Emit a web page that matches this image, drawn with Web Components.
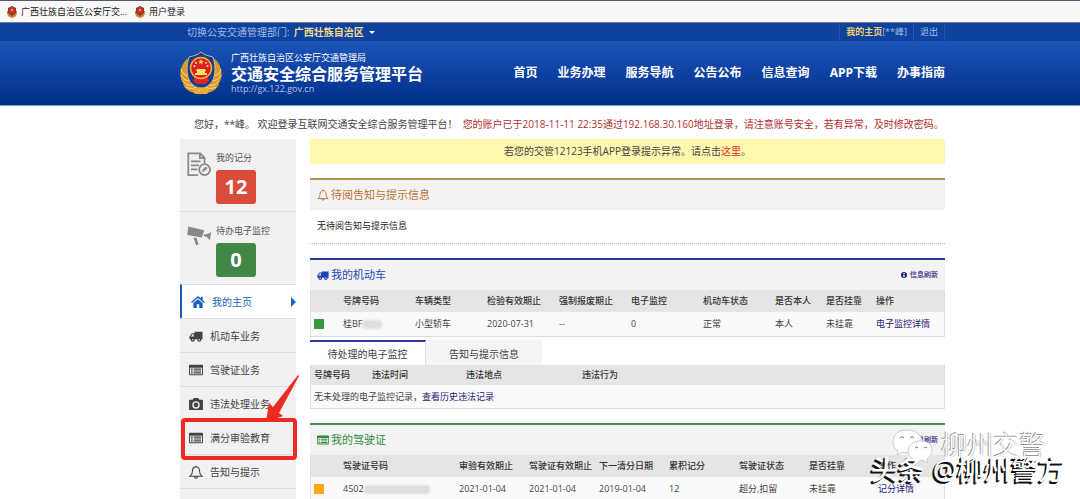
<!DOCTYPE html>
<html lang="zh-CN">
<head>
<meta charset="utf-8">
<title>交通安全综合服务管理平台</title>
<style>
  html, body { margin: 0; height: 100%; }
  body { font-family: "Open Sans", "Noto Sans CJK SC", sans-serif; font-size: 10px; line-height: 14px; color: #444; background: #fff; overflow: hidden; }
</style>
</head>
<body>
<portal-page></portal-page>

<script>
const sheet = `
  *, *::before, *::after { box-sizing: border-box; }
  :host { display: block; }
  :host([hidden]) { display: none; }
  a { color: inherit; text-decoration: none; }
  svg { display: block; }
`;

function define(name, css, html, setup) {
  const template = document.createElement('template');
  template.innerHTML = `<style>${sheet}${css}</style>${html}`;
  customElements.define(name, class extends HTMLElement {
    constructor() {
      super();
      this.attachShadow({ mode: 'open' }).append(template.content.cloneNode(true));
    }
    connectedCallback() { if (setup) setup(this, this.shadowRoot); }
  });
}

const icons = {
  truck: '<path d="M6 3h8.500v8H6zM.5 8l2.500-3.500h3V11H.5z"/><circle cx="4" cy="11.500" r="2.200"/><circle cx="11" cy="11.500" r="2.200"/><path d="M2 8 3.600 5.700H5V8z" fill="#eee"/><circle cx="4" cy="11.500" r=".8" fill="#eee"/><circle cx="11" cy="11.500" r=".8" fill="#eee"/>',
  card: '<path fill-rule="evenodd" d="M1 2h13a1 1 0 0 1 1 1v9a1 1 0 0 1-1 1H1a1 1 0 0 1-1-1V3a1 1 0 0 1 1-1zm0 3v7h13V5z"/><path d="M2 6h2v1.200H2zM5 6h8v1.200H5zM2 8h2v1.200H2zM5 8h8v1.200H5zM2 10h2v1.200H2zM5 10h8v1.200H5z"/>',
  camera: '<path fill-rule="evenodd" d="M5 1h5l1 2h3a1 1 0 0 1 1 1v9a1 1 0 0 1-1 1H1a1 1 0 0 1-1-1V4a1 1 0 0 1 1-1h3zM7.500 4.500a4 4 0 1 0 0 8 4 4 0 0 0 0-8zm0 1.500a2.500 2.500 0 1 1 0 5 2.500 2.500 0 0 1 0-5z"/>',
  bell: '<path d="M7.500 .8v1.200M7.500 2c-3 0-3.800 2.300-3.800 4.700 0 2.600-1 4-2.600 5.300h12.800c-1.600-1.300-2.600-2.700-2.600-5.300 0-2.400-.8-4.700-3.800-4.700zM6 12.500c0 2 3 2 3 0" fill="none" stroke="currentColor" stroke-width="1.200"/>',
  home: '<path d="M7.500 1 0 7.500l1 1.200 6.500-5.500L14 8.700l1-1.200-2.500-2.200V2h-2v1.600zM7.500 4.500 2.500 8.700V14h3.700v-4h2.600v4h3.700V8.700z"/>',
  info: '<path fill-rule="evenodd" d="M7.500 0a7.500 7.500 0 1 0 0 15 7.500 7.500 0 0 0 0-15zM6 2.500h3v2.300H6zM5.500 6H9v5h1v1.500H5V11h1V7.500h-.5z"/>',
  paper: '<g fill="none" stroke="currentColor" stroke-width="1.100"><path d="M7 14.400H.8V.8h7.400L11 3.600V7M8 .8v3h3M2.500 5.800h6M2.500 8.300h5M2.500 10.800h4"/><circle cx="11" cy="11" r="3.400"/></g><path d="m9.300 12.700.5-1.700 2-2 1.100 1.100-2 2z"/>',
  cctv: '<path d="m.8 1 10 2.300-1.500 4.500L.2 6.300zM10.900 5.400l1.100.6 3-1.400-.6 5-2.200-2.200-1.700-.4zM4 7.800l2 .4 1.200 4-1.500.5z"/>',
  user: '<circle cx="7.500" cy="4" r="3.500"/><path d="M1 15c0-4 2-6 6.500-6s6.500 2 6.500 6z"/>'
};

define('ui-icon', `
  :host { display: inline-block; flex: none; width: var(--icon-size, 14px); height: var(--icon-size, 14px); }
  svg { width: 100%; height: 100%; fill: currentColor; }
`, '<svg viewBox="0 0 15 15" aria-hidden="true"></svg>', (el, root) => {
  root.querySelector('svg').innerHTML = icons[el.getAttribute('name')] || '';
});

define('police-badge', `
  :host { flex: none; width: var(--badge-width, 42px); }
  svg { width: 100%; height: auto; }
`, `
  <svg viewBox="0 0 42 45" aria-hidden="true">
    <path d="M7 8C-1 16-1 26 3 32c1 7 8 10 18 11 10-1 17-4 18-11 4-6 4-16-4-24l-3 2v22H10V10z" fill="#d99a2b"/>
    <g fill="none" stroke="#ffe093" stroke-width="1"><path d="M1 18c1 4 3 6 7 7M1 24c2 4 5 6 9 6M3 30c3 4 7 5 11 4M6 36c4 2 8 2 12-1M41 18c-1 4-3 6-7 7M41 24c-2 4-5 6-9 6M39 30c-3 4-7 5-11 4M36 36c-4 2-8 2-12-1"/></g>
    <path d="M21 1c3 3 8 4 12 5 3 10 3 21-3 27-3 3-6 4-9 4s-6-1-9-4C6 27 6 16 9 6c4-1 9-2 12-5z" fill="#183c86" stroke="#cdb98d" stroke-width="1"/>
    <path d="M14 26h14l1 4-4 3h-8l-4-3z" fill="#d9252a"/>
    <circle cx="21" cy="17" r="10.500" fill="#de1f26" stroke="#f3ae38" stroke-width="1.500"/>
    <path d="m21 8 .8 2h2l-1.600 1.300.6 2L21 12l-1.800 1.300.6-2L18.200 10h2z" fill="#ffe35a"/>
    <g fill="#ffe35a"><circle cx="16" cy="12" r="1"/><circle cx="26" cy="12" r="1"/><circle cx="14.500" cy="15" r="1"/><circle cx="27.500" cy="15" r="1"/><path d="M17 18h8l1 2h-1v2h2v2H15v-2h2v-2h-1z"/></g>
    <path d="M12 39c6-3 12-3 18 0l-3 4H15z" fill="#e9ad3c"/>
  </svg>`);

define('mini-badge', `
  :host { flex: none; width: 10px; }
`, `
  <svg width="10" height="12" viewBox="0 0 10 12" aria-hidden="true">
    <path d="M0 5c0 4 1 6 5 7 4-1 5-3 5-7z" fill="#c9832c"/>
    <path d="M5 0 9 2v5L5 10 1 7V2z" fill="#7a3a2c"/>
    <circle cx="5" cy="4.500" r="3.200" fill="#c8322a"/><circle cx="5" cy="4" r="1" fill="#f4b64a"/>
  </svg>`);

define('bookmark-bar', `
  :host { border-top: 1px solid #555a68; border-bottom: 1px solid #70768f; background: #f8f8f8; color: #222; font-size: 9px; }
  nav { display: flex; align-items: center; gap: 8px; height: 21px; padding-left: 7px; }
  a { display: flex; align-items: center; gap: 4px; white-space: nowrap; }
`, `
  <nav aria-label="书签">
    <a href="#"><mini-badge></mini-badge>广西壮族自治区公安厅交...</a>
    <a href="#"><mini-badge></mini-badge>用户登录</a>
  </nav>`);

define('utility-bar', `
  :host { background: #0d429f; color: #a4b9e6; }
  .row { display: grid; grid-template-columns: minmax(0, 4fr) minmax(0, 17fr) minmax(0, 3fr); }
  .inner { grid-column: 2; display: flex; justify-content: space-between; height: 18px; line-height: 18px; }
  .area { display: flex; align-items: center; gap: 4px; padding-left: 7px; }
  button { display: flex; align-items: center; gap: 5px; padding: 0; border: 0; background: none; font: inherit; font-weight: 700; color: #f2d88c; }
  button::after { content: ""; border: 3px solid transparent; border-top-color: #fff; border-bottom: 0; }
  .account { display: flex; font-size: 9px; border-left: 1px solid #2455ab; }
  .account a { padding: 0 6px; border-right: 1px solid #2455ab; }
  b { color: #f2cf6c; }
`, `
  <div class="row"><div class="inner">
    <div class="area"><span>切换公安交通管理部门:</span><button type="button">广西壮族自治区</button></div>
    <div class="account"><a href="#"><b>我的主页</b>[**峰]</a><a href="#">退出</a></div>
  </div></div>`);

define('site-header', `
  :host { background: linear-gradient(#1c54b8, #0c3f9f 55%, #002f87); border-bottom: 1px solid #8296d0; color: #fff; }
  .row { display: grid; grid-template-columns: minmax(0, 4fr) minmax(0, 17fr) minmax(0, 3fr); }
  .inner { grid-column: 2; display: flex; align-items: center; justify-content: space-between; height: 64px; }
  .brand { display: flex; align-items: center; gap: 9px; }
  .org { font-size: 9px; line-height: 12px; }
  h1 { margin: 0; font-size: 16px; line-height: 20px; white-space: nowrap; }
  .url { font-size: 9px; line-height: 10px; color: #b4c6ec; }
  nav { display: flex; gap: 20px; font-size: 12px; font-weight: 700; line-height: 16px; white-space: nowrap; }
`, `
  <div class="row"><div class="inner">
    <div class="brand">
      <police-badge></police-badge>
      <div>
        <div class="org">广西壮族自治区公安厅交通管理局</div>
        <h1>交通安全综合服务管理平台</h1>
        <div class="url">http://gx.122.gov.cn</div>
      </div>
    </div>
    <nav aria-label="主导航">
      <a href="#">首页</a><a href="#">业务办理</a><a href="#">服务导航</a><a href="#">公告公布</a><a href="#">信息查询</a><a href="#">APP下载</a><a href="#">办事指南</a>
    </nav>
  </div></div>`);

define('score-card', `
  :host { display: flex; gap: 5px; padding: 12px 7px 7px; border-bottom: 1px solid #ddd; font-size: 9px; color: #555; }
  :host(:last-of-type) { border-bottom: 0; }
  ::slotted(ui-icon) { --icon-size: 24px; margin-top: 1px; color: #888; }
  .value { display: block; width: 40px; margin-top: 5px; border-radius: 3px; background: var(--value-color); color: #fff; font-size: 20px; font-weight: 700; line-height: 34px; text-align: center; }
`, `<slot name="icon"></slot><div><slot></slot><span class="value"><slot name="value"></slot></span></div>`);

define('nav-item', `
  :host { position: relative; }
  a { display: flex; align-items: center; gap: 7px; height: 34px; padding-left: 9px; border-top: 1px solid #ddd; color: #444; }
  ui-icon { --icon-size: 14px; }
  :host([current]) a { border-left: 2px solid #1a5fb4; background: #fff; color: #1a62b8; }
  :host([current]) a::after { content: ""; margin-left: auto; border: 5px solid transparent; border-left-color: #1a62b8; border-right: 0; }
`, `<a href="#"><ui-icon></ui-icon><slot></slot></a><slot name="mark"></slot>`, (el, root) => {
  const icon = document.createElement('ui-icon');
  icon.setAttribute('name', el.getAttribute('icon'));
  root.querySelector('ui-icon').replaceWith(icon);
});

define('callout-mark', `
  :host { position: absolute; z-index: 2; inset: -2px -1px -6px 1px; border: 4px solid #ee2a24; border-radius: 4px; }
  svg { position: absolute; right: -6px; bottom: 100%; width: 34px; height: 48px; }
`, `<svg viewBox="0 0 34 48" aria-hidden="true"><path d="M33 1 34 2 14 39l4 3-17 6 3-19 4 4z" fill="#ee2a24"/></svg>`);

define('side-bar', `:host { background: #f1f1f1; }`, `
  <score-card style="--value-color:#d94b3a"><ui-icon slot="icon" name="paper"></ui-icon>我的记分<span slot="value">12</span></score-card>
  <score-card style="--value-color:#438746"><ui-icon slot="icon" name="cctv"></ui-icon>待办电子监控<span slot="value">0</span></score-card>
  <nav aria-label="业务菜单">
    <nav-item icon="home" current>我的主页</nav-item>
    <nav-item icon="truck">机动车业务</nav-item>
    <nav-item icon="card">驾驶证业务</nav-item>
    <nav-item icon="camera">违法处理业务</nav-item>
    <nav-item icon="card">满分审验教育<callout-mark slot="mark"></callout-mark></nav-item>
    <nav-item icon="bell">告知与提示</nav-item>
    <nav-item icon="user"></nav-item>
  </nav>`);

define('content-panel', `
  :host { margin-top: 14px; }
  header { display: flex; align-items: center; gap: 2px; height: 32px; padding: 0 7px; border-top: 2px solid var(--accent); background: #f3f3f3; color: var(--title, var(--accent)); }
  ui-icon { --icon-size: 12px; }
  h2 { margin: 0; font-size: 11px; font-weight: 400; line-height: 16px; }
  .tools { margin-left: auto; }
`, `<header><ui-icon></ui-icon><h2><slot name="title"></slot></h2><div class="tools"><slot name="tools"></slot></div></header><slot></slot>`,
(el, root) => {
  const icon = document.createElement('ui-icon');
  icon.setAttribute('name', el.getAttribute('icon'));
  root.querySelector('ui-icon').replaceWith(icon);
});

define('refresh-link', `
  a { display: flex; align-items: center; gap: 3px; color: #1c2178; font-size: 7px; font-weight: 500; line-height: 10px; }
  ui-icon { --icon-size: 6px; }
`, `<a href="#"><ui-icon name="info"></ui-icon>信息刷新</a>`);

const tableSheet = `
  table { width: 100%; table-layout: fixed; border-collapse: separate; border-spacing: 0; border: 1px solid #ddd; border-top: 0; background: #fafafa; font-size: 9px; line-height: 12px; white-space: nowrap; }
  th, td { height: 24px; padding: 0; text-align: left; }
  th { height: 22px; background: #e5e5e5; font-weight: 500; color: #333; }
  a { color: #1c2178; }
  .lamp { display: block; width: 10px; height: 10px; margin-left: 3px; }
  .smudge { display: inline-block; height: 9px; border-radius: 4px; background: #dedede; filter: blur(1px); vertical-align: middle; }
`;

define('vehicle-table', tableSheet + `.lamp { background: #2f9a41; } .smudge { width: 20px; }`, `
  <table>
    <colgroup><col width="32"><col width="72"><col width="72"><col width="72"><col width="72"><col width="72"><col width="72"><col width="51"><col width="50"><col></colgroup>
    <thead><tr><th></th><th>号牌号码</th><th>车辆类型</th><th>检验有效期止</th><th>强制报废期止</th><th>电子监控</th><th>机动车状态</th><th>是否本人</th><th>是否挂靠</th><th>操作</th></tr></thead>
    <tbody><tr><td><span class="lamp"></span></td><td>桂BF<span class="smudge"></span></td><td>小型轿车</td><td>2020-07-31</td><td>--</td><td>0</td><td>正常</td><td>本人</td><td>未挂靠</td><td><a href="#">电子监控详情</a></td></tr></tbody>
  </table>`);

define('violation-tabs', tableSheet + `
  :host { margin-top: 3px; }
  .tabs { display: flex; height: 25px; }
  button { width: 116px; padding: 0; border: 0; border-top: 2px solid #f5f5f5; background: #f5f5f5; font: inherit; color: #444; }
  button[aria-selected="true"] { border-top-color: #2b3ba0; border-right: 1px solid #ddd; background: #fff; }
  th { height: 20px; }
  td { height: 23px; }
  th:first-child, td:first-child { padding-left: 3px; }
`, `
  <div class="tabs" role="tablist"><button type="button" role="tab" aria-selected="true">待处理的电子监控</button><button type="button" role="tab" aria-selected="false">告知与提示信息</button></div>
  <table>
    <colgroup><col width="61"><col width="94"><col width="116"><col></colgroup>
    <thead><tr><th>号牌号码</th><th>违法时间</th><th>违法地点</th><th>违法行为</th></tr></thead>
    <tbody><tr><td colspan="4">无未处理的电子监控记录，<a href="#">查看历史违法记录</a></td></tr></tbody>
  </table>`);

define('license-table', tableSheet + `.lamp { background: #ffa514; } .smudge { width: 66px; }`, `
  <table>
    <colgroup><col width="32"><col width="116"><col width="70"><col width="70"><col width="70"><col width="70"><col width="70"><col width="69"><col></colgroup>
    <thead><tr><th></th><th>驾驶证号码</th><th>审验有效期止</th><th>驾驶证有效期止</th><th>下一清分日期</th><th>累积记分</th><th>驾驶证状态</th><th>是否挂靠</th><th>操作</th></tr></thead>
    <tbody><tr><td><span class="lamp"></span></td><td>4502<span class="smudge"></span></td><td>2021-01-04</td><td>2021-01-04</td><td>2019-01-04</td><td>12</td><td>超分,扣留</td><td>未挂靠</td><td><a href="#">记分详情</a></td></tr></tbody>
  </table>`);

define('photo-watermark', `
  :host { position: absolute; z-index: 3; right: 15px; bottom: 11px; color: #fff; white-space: nowrap; }
  .account { display: flex; align-items: center; justify-content: flex-end; gap: 7px; margin-right: 20px; font-size: 26px; line-height: 28px; font-weight: 300; text-shadow: -1px -1px 0 #999, 1px 0 0 #ccc; }
  svg { width: 42px; height: 35px; margin-bottom: -4px; }
  .source { display: flex; justify-content: flex-end; gap: 8px; margin-top: -8px; font-size: 27px; font-weight: 500; line-height: 36px; text-shadow: -2px 2px 0 #111, -1px 1px 0 #111; }
`, `
  <div class="account">
    <svg viewBox="0 0 42 35" aria-hidden="true"><path d="M15 1C6 1 1 6 1 13c0 4 2 7 5 9l-1 4 5-3c13 3 20-3 20-10C30 6 24 1 15 1z" fill="#fff" stroke="#ccc"/><path d="M29 12c-8 0-13 4-13 10s6 11 15 9l5 3-1-4c8-5 7-18-6-18z" fill="#fff" stroke="#ccc"/><g fill="none" stroke="#777"><path d="M8 9q2-3 4 0M18 9q2-3 4 0M23 19q2-2 3 0M32 19q2-2 3 0"/></g></svg>
    <span>柳州交警</span>
  </div>
  <div class="source"><span>头条</span><span>@柳州警方</span></div>`);

define('portal-page', `
  :host { position: relative; height: 100%; overflow: hidden; }
  .row { display: grid; grid-template-columns: minmax(0, 4fr) minmax(0, 17fr) minmax(0, 3fr); }
  main { grid-column: 2; }
  .welcome { display: flex; gap: 5px; margin: 0; padding: 11px 0 8px 14px; white-space: nowrap; }
  .welcome em { font-style: normal; color: #b0302e; }
  .columns { display: grid; grid-template-columns: 116px minmax(0, 1fr); gap: 14px; }
  .notice { margin: 0; background: #fff8ae; line-height: 25px; text-align: center; }
  .notice a { color: #e8301c; }
  .empty { margin: 0; padding: 9px 7px 10px; border-bottom: 1px dotted #bbb; font-size: 9px; color: #222; }
`, `
  <bookmark-bar></bookmark-bar>
  <utility-bar></utility-bar>
  <site-header></site-header>
  <div class="row"><main>
    <p class="welcome"><span>您好，**峰。 欢迎登录互联网交通安全综合服务管理平台！</span><em>您的账户已于2018-11-11 22:35通过192.168.30.160地址登录，请注意账号安全，若有异常，及时修改密码。</em></p>
    <div class="columns">
      <side-bar></side-bar>
      <div>
        <p class="notice">若您的交管12123手机APP登录提示异常。请点击<a href="#">这里</a>。</p>
        <content-panel icon="bell" style="--accent:#b98c50;--title:#bd7434"><span slot="title">待阅告知与提示信息</span><p class="empty">无待阅告知与提示信息</p></content-panel>
        <content-panel icon="truck" style="--accent:#2b3b9b;--title:#2346b4"><span slot="title">我的机动车</span><refresh-link slot="tools"></refresh-link>
          <vehicle-table></vehicle-table>
          <violation-tabs></violation-tabs>
        </content-panel>
        <content-panel icon="card" style="--accent:#4c8f50;--title:#338a3a"><span slot="title">我的驾驶证</span><refresh-link slot="tools"></refresh-link>
          <license-table></license-table>
        </content-panel>
      </div>
    </div>
  </main></div>
  <photo-watermark></photo-watermark>`);
</script>
</body>
</html>
